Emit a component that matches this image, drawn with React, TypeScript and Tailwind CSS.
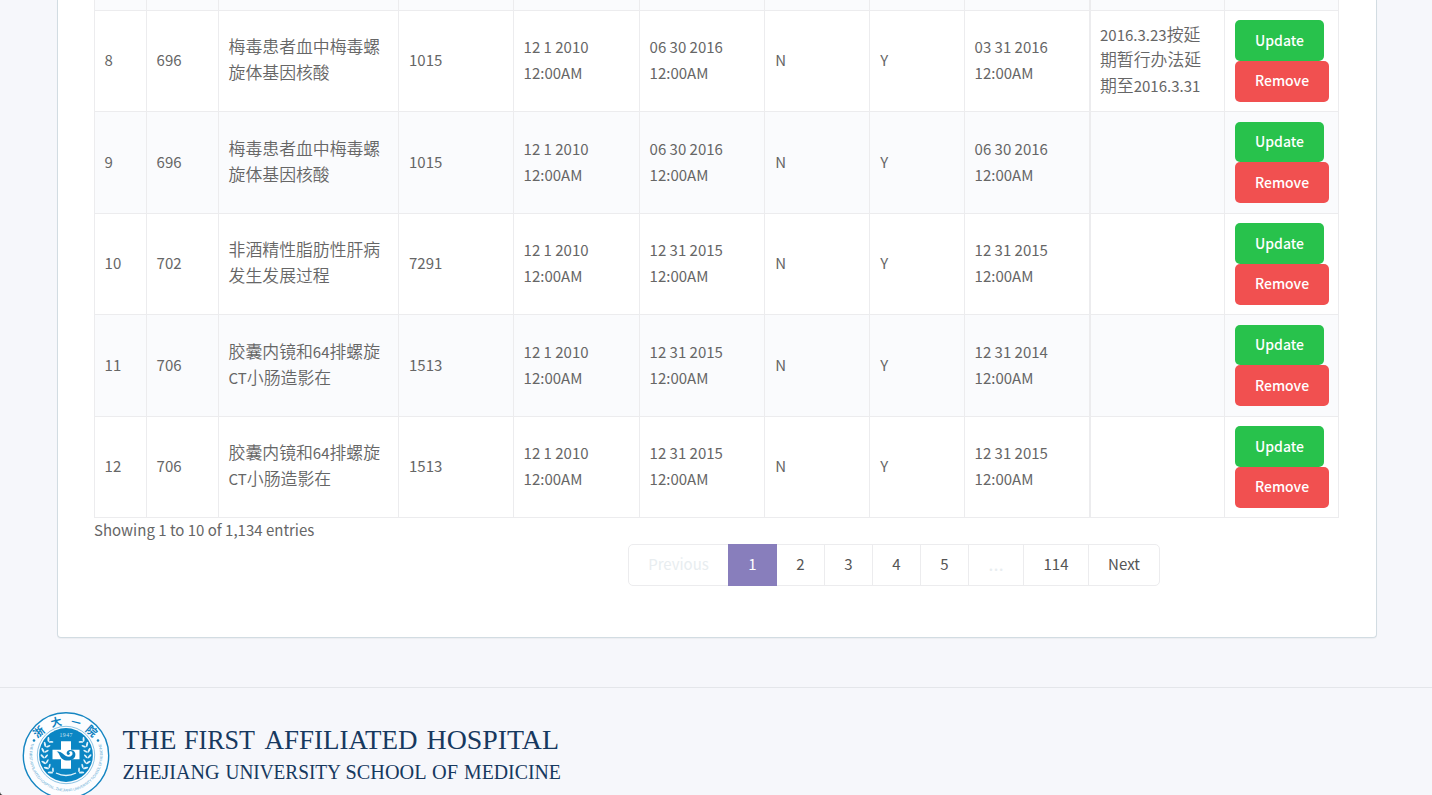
import React from "react";

type Row = { id: string; code: string; name: string[]; num: string; start: string; end: string; last: string; note: string[]; h: string };

const rows: Row[] = [
  { id: "8", code: "696", name: ["梅毒患者血中梅毒螺", "旋体基因核酸"], num: "1015", start: "12 1 2010", end: "06 30 2016", last: "03 31 2016", note: ["2016.3.23按延", "期暂行办法延", "期至2016.3.31"], h: "h-[101px]" },
  { id: "9", code: "696", name: ["梅毒患者血中梅毒螺", "旋体基因核酸"], num: "1015", start: "12 1 2010", end: "06 30 2016", last: "06 30 2016", note: [], h: "h-[102px]" },
  { id: "10", code: "702", name: ["非酒精性脂肪性肝病", "发生发展过程"], num: "7291", start: "12 1 2010", end: "12 31 2015", last: "12 31 2015", note: [], h: "h-[101px]" },
  { id: "11", code: "706", name: ["胶囊内镜和64排螺旋", "CT小肠造影在"], num: "1513", start: "12 1 2010", end: "12 31 2015", last: "12 31 2014", note: [], h: "h-[102px]" },
  { id: "12", code: "706", name: ["胶囊内镜和64排螺旋", "CT小肠造影在"], num: "1513", start: "12 1 2010", end: "12 31 2015", last: "12 31 2015", note: [], h: "h-[101px]" },
];

const cols = "grid grid-cols-[52px_72px_180px_115px_126px_125px_105px_95px_125px_135px_115px]";

function Line({ text }: { text: string }) {
  return (
    <div className="h-[25.6px] whitespace-nowrap">
      {text.split(/([\u4e00-\u9fff]+)/).filter(Boolean).map((part, i) =>
        /[\u4e00-\u9fff]/.test(part) ? <span key={i} className="text-[16.85px] leading-none font-[350]">{part}</span> : part
      )}
    </div>
  );
}

function Cell({ lines, className = "border-l pl-[9.6px]" }: { lines: string[]; className?: string }) {
  return (
    <div className={`flex flex-col justify-center border-[#ececee] pb-[2px] ${className}`}>
      {lines.map((l) => <Line key={l} text={l} />)}
    </div>
  );
}

function TableRow({ row, striped }: { row: Row; striped: boolean }) {
  return (
    <div className={`${cols} ${row.h} border-t border-r border-[#ececee] ${striped ? "bg-[#fafbfd]" : "bg-white"}`}>
      <Cell lines={[row.id]} />
      <Cell lines={[row.code]} />
      <Cell lines={row.name} />
      <Cell lines={[row.num]} className="border-l pl-[10px]" />
      <Cell lines={[row.start, "12:00AM"]} />
      <Cell lines={[row.end, "12:00AM"]} />
      <Cell lines={["N"]} className="border-l pl-[10.2px]" />
      <Cell lines={["Y"]} className="border-l pl-[10.2px]" />
      <Cell lines={[row.last, "12:00AM"]} />
      <Cell lines={row.note} className="border-l-2 pl-[9px]" />
      <div className={`flex flex-col items-start border-l border-[#ececee] pl-[10px] text-[14px] font-medium text-white ${striped ? "pt-[9.8px]" : "pt-[9.4px]"}`}>
        <button className="h-[40.6px] w-[89px] rounded-[5px] bg-[#28c24c]">Update</button>
        <button className="h-[40.6px] w-[94px] rounded-[5px] bg-[#f15050]">Remove</button>
      </div>
    </div>
  );
}

const pages = [
  { label: "Previous", cls: "w-[99px] text-[#e8edf0]" },
  { label: "1", cls: "-my-px h-[42px] w-[49px] bg-[#887ebc] text-white" },
  { label: "2", cls: "w-[47px]" },
  { label: "3", cls: "w-[48px] border-l" },
  { label: "4", cls: "w-[48px] border-l" },
  { label: "5", cls: "w-[48px] border-l" },
  { label: "…", cls: "w-[55px] border-l text-[#e8edf0] font-['Open_Sans',sans-serif] text-[20px]" },
  { label: "114", cls: "w-[65px] border-l" },
  { label: "Next", cls: "w-[71px] border-l" },
];

function Seal() {
  return (
    <svg className="-mt-px h-[88px] w-[88px] shrink-0" viewBox="0 0 88 88" fill="none">
      <defs>
        <path id="rim" d="M9.5 32 A36.5 36.5 0 1 0 78.5 32" />
      </defs>
      <circle cx="44" cy="44.5" r="42.7" fill="#fcfdff" stroke="#1686c2" strokeWidth="1.4" />
      <circle cx="44" cy="44" r="28.7" stroke="#8ec3e2" strokeWidth="1" />
      <circle cx="44" cy="44" r="26.9" fill="#0b86c4" />
      <g fill="#0b80bf" fontFamily="Noto Sans CJK SC" fontWeight="700" textAnchor="middle">
        <text transform="translate(19.5 24) rotate(-40)" fontSize="11">浙</text>
        <text transform="translate(35 15) rotate(-13)" fontSize="11">大</text>
        <text transform="translate(53 15) rotate(14)" fontSize="9.5">一</text>
        <text transform="translate(67 23) rotate(41)" fontSize="11">院</text>
      </g>
      <circle cx="12" cy="29.5" r="1.3" fill="#1686c2" />
      <circle cx="76" cy="29.5" r="1.3" fill="#1686c2" />
      <text fontFamily="Liberation Sans" fontSize="3.7" fill="#5ba7d2">
        <textPath href="#rim" textLength="138">THE FIRST AFFILIATED HOSPITAL, ZHEJIANG UNIVERSITY SCHOOL OF MEDICINE</textPath>
      </text>
      <text x="44" y="26.4" fill="#c5e2f1" fontFamily="Liberation Serif" fontSize="5.8" textAnchor="middle" textLength="13">1947</text>
      <path d="M39 30.2h10v8.6h8.5v9.5H49v9.5H39v-9.5h-8.5v-9.5H39z" fill="#fff" />
      <path d="M34.5 40.5c4.5-.4 6 2.2 9 4.2 4 2.4 7.5 0 7-2.7-.3-2-3-2.4-3.5-.5 1 .3 1.3 1.3.4 2.1-1.7 1.1-3.5-.8-2.5-2.7 1.6-3 7.7-2.2 8.4 1.5 1.2 6.2-8.2 9.8-13.5 5-2.5-2.2-2.4-5.9-5.3-6.9z" fill="#0b80bf" />
      {[0, 1].map((side) => (
        <g key={side} transform={side ? "translate(88 0) scale(-1 1)" : undefined}>
          {[-2, -1, 0, 1, 2, 3, 4].map((n) => (
            <g key={n} transform={`rotate(${-n * 15 + 14} 44 44)`} fill="#e1f2fa">
              <ellipse cx="20.5" cy="45" rx="2.7" ry="1" transform="rotate(48 20.5 45)" />
              <ellipse cx="24.2" cy="45" rx="2.4" ry=".9" transform="rotate(-45 24.2 45)" />
            </g>
          ))}
        </g>
      ))}
      <path d="M34 62q10 5 20 0" stroke="#e1f2fa" strokeWidth="1.3" />
    </svg>
  );
}

type Word = { text: string; x: number; w: number };

const titleWords: Word[] = [
  { text: "THE", x: 0.5, w: 54 },
  { text: "FIRST", x: 62, w: 71 },
  { text: "AFFILIATED", x: 142.5, w: 153 },
  { text: "HOSPITAL", x: 304.5, w: 132.5 },
];

const subtitleWords: Word[] = [
  { text: "ZHEJIANG", x: 0.5, w: 97 },
  { text: "UNIVERSITY", x: 103.5, w: 115.5 },
  { text: "SCHOOL", x: 223.5, w: 81 },
  { text: "OF", x: 310, w: 26 },
  { text: "MEDICINE", x: 342, w: 97 },
];

function Wordmark() {
  return (
    <svg className="ml-[12px] h-[88px] w-[450px]" viewBox="0 0 450 88" fill="#17395f" fontFamily="Liberation Serif">
      {titleWords.map((w) => (
        <text key={w.text} x={w.x} y="36.8" fontSize="27.5" textLength={w.w} lengthAdjust="spacingAndGlyphs">{w.text}</text>
      ))}
      {subtitleWords.map((w) => (
        <text key={w.text} x={w.x} y="66.8" fontSize="20.5" textLength={w.w} lengthAdjust="spacingAndGlyphs">{w.text}</text>
      ))}
    </svg>
  );
}

export default function App() {
  return (
    <div className="relative h-[795px] w-[1432px] overflow-hidden bg-[#f6f7fb] font-['Noto_Sans_CJK_SC',sans-serif] text-[15px] leading-[25.6px] text-[#666]">
      <main className="ml-[57px] h-[638px] w-[1320px] rounded-b-[4px] border-x border-b border-[#d2dce2] bg-white px-9 shadow-[0_1px_1px_rgba(0,0,0,0.04)]">
        <div className={`${cols} h-[10px] w-[1245px] border-r border-[#ececee] bg-[#fafbfd]`}>
          {Array.from({ length: 11 }, (_, i) => <div key={i} className={`border-[#ececee] ${i === 9 ? "border-l-2" : "border-l"}`} />)}
        </div>
        <div className="w-[1245px] border-b border-[#ececee]">
          {rows.map((row, i) => <TableRow key={row.id} row={row} striped={i % 2 === 1} />)}
        </div>
        <div className="h-[26px] leading-[24px]">Showing 1 to 10 of 1,134 entries</div>
        <nav className="ml-[534px] flex h-[42px] w-[532px] rounded-[5px] border border-[#ececee] text-[#555]">
          {pages.map((p) => <div key={p.label} className={`flex items-center justify-center border-[#ececee] pb-[2px] ${p.cls}`}>{p.label}</div>)}
        </nav>
      </main>
      <footer className="mt-[49px] flex h-[120px] items-start border-t border-[#e4e6ea] pt-6 pl-[22px]">
        <Seal />
        <Wordmark />
      </footer>
      <svg className="absolute bottom-0 left-0 h-[3px] w-[3px]" viewBox="0 0 3 3"><path d="M0 0Q.3 2.4 2.5 3H0z" fill="#333" /></svg>
    </div>
  );
}
